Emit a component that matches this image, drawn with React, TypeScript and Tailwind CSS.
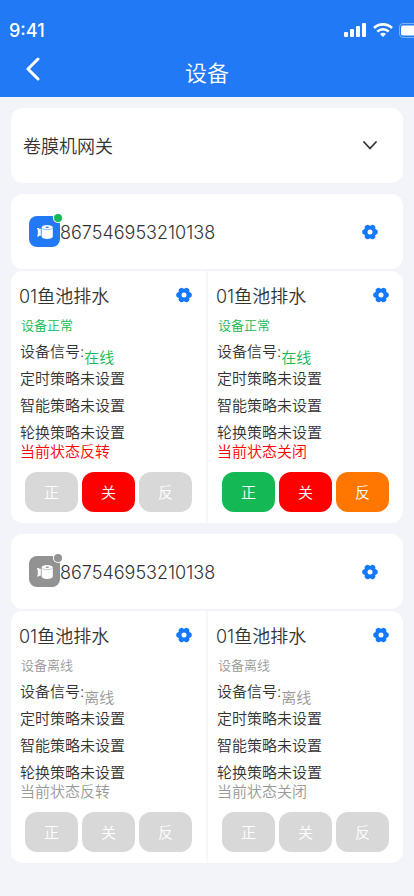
import clsx from 'clsx'

type Status = 'green' | 'red' | 'orange' | 'off'

interface Channel {
    state: string
    buttons: Status[]
}

interface Gateway {
    id: string
    online: boolean
    channels: Channel[]
}

const gateways: Gateway[] = [
    {
        id: '867546953210138',
        online: true,
        channels: [
            { state: '当前状态反转', buttons: ['off', 'red', 'off'] },
            { state: '当前状态关闭', buttons: ['green', 'red', 'orange'] },
        ],
    },
    {
        id: '867546953210138',
        online: false,
        channels: [
            { state: '当前状态反转', buttons: ['off', 'off', 'off'] },
            { state: '当前状态关闭', buttons: ['off', 'off', 'off'] },
        ],
    },
]

const buttonLabels = ['正', '关', '反']
const strategies = ['定时策略未设置', '智能策略未设置', '轮换策略未设置']

const buttonColors: Record<Status, string> = {
    green: 'bg-[#14b955]',
    red: 'bg-[#ff0000]',
    orange: 'bg-[#ff7700]',
    off: 'bg-[#d8d8d8]',
}

function GearIcon() {
    return (
        <svg width="16" height="16" viewBox="-8 -8 16 16" fill="#1479ff">
            <circle r="6.2" />
            {[0, 60, 120, 180, 240, 300].map((angle) => (
                <circle key={angle} cx="5" r="2.8" transform={`rotate(${angle})`} />
            ))}
            <circle r="2.5" fill="#fff" />
        </svg>
    )
}

function RollIcon({ color }: { color: string }) {
    return (
        <svg width="16" height="14" viewBox="0 0 16 14" fill="#fff">
            <path d="M0 3h1.5l.8.8h1.500v7H2.300l-.8.8H0l.8-2.200V5.500z" />
            <path d="M4.600 2.400C4.600 1 7 0 10.200 0s5.600 1 5.600 2.400v9.200c0 1.400-2.400 2.400-5.600 2.400s-5.600-1-5.600-2.400z" />
            <path d="M4.800 2.800c.4 1.200 2.500 1.900 5.400 1.900s5-.7 5.400-1.900" fill="none" stroke={color} strokeWidth="0.5" />
            <ellipse cx="10.2" cy="2.3" rx="1.7" ry="0.8" fill={color} />
        </svg>
    )
}

function StatusBar() {
    return (
        <div className="flex h-11 items-center justify-between pt-4 pl-[9px]">
            <span className="pt-0.5 font-[Inter] text-lg font-medium">9:41</span>
            <div className="flex items-center gap-1.5 overflow-hidden">
                <svg width="23" height="14" viewBox="0 0 23 14" fill="#fff">
                    <rect x="0" y="9" width="4" height="5" rx="1" />
                    <rect x="6" y="6" width="4" height="8" rx="1" />
                    <rect x="12" y="3" width="4" height="11" rx="1" />
                    <rect x="18" y="0" width="4" height="14" rx="1" />
                </svg>
                <svg width="20" height="14" viewBox="0 0 20 14" fill="none" stroke="#fff" strokeWidth="2.6">
                    <path d="M1 5a13 13 0 0 1 18 0" />
                    <path d="M4.3 8.6a8.2 8.2 0 0 1 11.4 0" />
                    <path d="M7 11a4.5 4.5 0 0 1 6 0l-3 3z" fill="#fff" stroke="none" />
                </svg>
                <svg width="15" height="15" viewBox="0 0 15 15">
                    <rect x="0.5" y="0.5" width="28" height="14" rx="3.5" fill="none" stroke="#fff" strokeOpacity="0.4" />
                    <rect x="2" y="2.5" width="25" height="10" rx="2" fill="#fff" />
                </svg>
            </div>
        </div>
    )
}

function ChannelCard({ channel, online }: { channel: Channel; online: boolean }) {
    const statusColor = online ? 'text-[#14b955]' : 'text-[#999999]'

    return (
        <section className="bg-white pt-3 pr-3.5 pb-[11px] pl-2">
            <div className="flex items-start justify-between">
                <h2 className="text-lg leading-7">01鱼池排水</h2>
                <button aria-label="通道设置" className="pt-1">
                    <GearIcon />
                </button>
            </div>
            <p className={clsx('mt-[3px] pl-0.5 text-[13px] leading-[22px]', statusColor)}>
                {online ? '设备正常' : '设备离线'}
            </p>
            <div className="mt-0.5 flex items-start text-[15px] leading-[27px]">
                <span className="pl-px">设备信号:</span>
                <span className={clsx('-mb-2 pt-1.5', statusColor)}>{online ? '在线' : '离线'}</span>
            </div>
            <ul className="pl-px text-[15px] leading-[27px]">
                {strategies.map((text) => (
                    <li key={text}>{text}</li>
                ))}
            </ul>
            <p className={clsx('-mt-1 pl-px text-[15px] leading-5', online ? 'text-[#ff0000]' : 'text-[#999999]')}>
                {channel.state}
            </p>
            <div className="mt-2.5 grid grid-cols-3 gap-1 pl-1.5">
                {channel.buttons.map((status, i) => (
                    <button
                        key={buttonLabels[i]}
                        className={clsx('h-10 rounded-xl pt-0.5 text-[15px] text-white', buttonColors[status])}
                    >
                        {buttonLabels[i]}
                    </button>
                ))}
            </div>
        </section>
    )
}

function GatewayCard({ gateway }: { gateway: Gateway }) {
    const { id, online, channels } = gateway

    return (
        <article>
            <div className="flex h-[75px] items-center rounded-xl bg-white pr-[25px] pl-[18px]">
                <div
                    className={clsx(
                        'relative flex size-[31px] items-center justify-center rounded-lg',
                        online ? 'bg-[#2179f5]' : 'bg-[#929292]'
                    )}
                >
                    <RollIcon color={online ? '#2179f5' : '#929292'} />
                    <span
                        className={clsx(
                            'absolute -top-0.5 -right-0.5 size-2 rounded-full ring-1 ring-white',
                            online ? 'bg-[#14b955]' : 'bg-[#929292]'
                        )}
                    />
                </div>
                <span className="flex-1 pt-0.5 text-lg">{id}</span>
                <button aria-label="网关设置">
                    <GearIcon />
                </button>
            </div>
            <div className="mt-0.5 grid grid-cols-2 gap-0.5 overflow-hidden rounded-xl bg-[#f7f8fb]">
                {channels.map((channel) => (
                    <ChannelCard key={channel.state} channel={channel} online={online} />
                ))}
            </div>
        </article>
    )
}

export default function App() {
    return (
        <div className="min-h-screen bg-[#f3f4f9] font-[Inter,'Noto_Sans_CJK_SC',sans-serif] font-[350] text-[#333333]">
            <header className="h-[97px] bg-[#2179f5] text-white">
                <StatusBar />
                <div className="grid h-[50px] grid-cols-3 items-center px-6">
                    <button aria-label="返回" className="justify-self-start">
                        <svg width="18" height="24" viewBox="0 0 18 24" fill="none" stroke="#fff" strokeWidth="3">
                            <path d="M14 2 4 12l10 10" strokeLinecap="round" strokeLinejoin="round" />
                        </svg>
                    </button>
                    <h1 className="pt-2 text-center text-[22px]">设备</h1>
                </div>
            </header>
            <main className="flex flex-col gap-[11px] px-[11px] pt-[11px] pb-8">
                <button className="flex h-[75px] items-center justify-between rounded-xl bg-white pr-[26px] pl-3 text-lg">
                    <span className="pt-0.5">卷膜机网关</span>
                    <svg width="14" height="9" viewBox="0 0 14 9" fill="none" stroke="#333" strokeWidth="1.8">
                        <path d="M1 1l6 6.500L13 1" strokeLinecap="round" strokeLinejoin="round" />
                    </svg>
                </button>
                {gateways.map((gateway, i) => (
                    <GatewayCard key={i} gateway={gateway} />
                ))}
            </main>
        </div>
    )
}
